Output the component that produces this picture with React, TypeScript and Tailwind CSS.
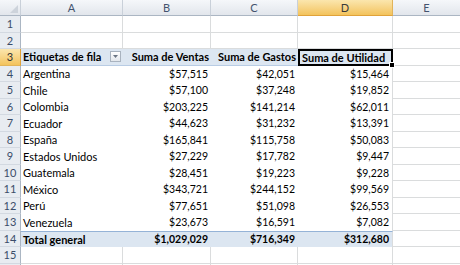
const data: [string, string, string, string][] = [
  ["Argentina", "$57,515", "$42,051", "$15,464"],
  ["Chile", "$57,100", "$37,248", "$19,852"],
  ["Colombia", "$203,225", "$141,214", "$62,011"],
  ["Ecuador", "$44,623", "$31,232", "$13,391"],
  ["España", "$165,841", "$115,758", "$50,083"],
  ["Estados Unidos", "$27,229", "$17,782", "$9,447"],
  ["Guatemala", "$28,451", "$19,223", "$9,228"],
  ["México", "$343,721", "$244,152", "$99,569"],
  ["Perú", "$77,651", "$51,098", "$26,553"],
  ["Venezuela", "$23,673", "$16,591", "$7,082"],
];

const grid = "grid grid-cols-[21px_102px_88px_87px_95px_1fr] h-[16.5px]";
const colHead =
  "flex items-center justify-center border-r border-b border-r-[#c9d0d9] border-b-[#abb6c3] bg-gradient-to-b from-[#f5f7fa] to-[#e2e6ec] text-[#43536e]";
const colHeadSel =
  "flex items-center justify-center border-r border-b border-r-[#e2b45a] border-b-[#e0a23a] bg-gradient-to-b from-[#fbe6ad] to-[#f3c35b] text-[#3a3a3a]";
const blank = "border-r border-b border-[#dadcdd]";
const num = "flex items-center justify-end pr-[3px] text-[10.5px]";

function RowNum({ n, active }: { n?: number; active?: boolean }) {
  return (
    <div
      className={
        active
          ? "flex items-center justify-center border-r border-b border-r-[#e0a23a] border-b-[#e2b45a] bg-gradient-to-b from-[#fbe6ad] to-[#f3c35b] text-[#333]"
          : "flex items-center justify-center border-r border-b border-r-[#abb6c3] border-b-[#d3d9e1] bg-[#e8ecf1] text-[#3a4c69]"
      }
    >
      {n}
    </div>
  );
}

function EmptyRow({ n }: { n?: number }) {
  return (
    <div className={grid}>
      <RowNum n={n} />
      <div className={blank} />
      <div className={blank} />
      <div className={blank} />
      <div className={blank} />
      <div className="border-b border-[#dadcdd]" />
    </div>
  );
}

export default function App() {
  return (
    <div className="w-[460px] h-[265px] overflow-hidden bg-white font-[Lato,sans-serif] text-[11px] leading-none text-black">
      {/* column letters */}
      <div className="grid grid-cols-[21px_102px_88px_87px_95px_1fr] h-[16px]">
        <div className="relative border-r border-b border-r-[#c9d0d9] border-b-[#abb6c3] bg-gradient-to-b from-[#f5f7fa] to-[#e2e6ec]">
          <svg className="absolute right-[2px] bottom-[2px]" width="8" height="8" viewBox="0 0 8 8">
            <polygon points="8,0 8,8 0,8" fill="#cdd3db" />
          </svg>
        </div>
        <div className={colHead}>A</div>
        <div className={colHead}>B</div>
        <div className={colHead}>C</div>
        <div className={colHeadSel}>D</div>
        <div className={colHead + " border-r-0"}>E</div>
      </div>

      <EmptyRow n={1} />
      <EmptyRow n={2} />

      {/* pivot header */}
      <div className={grid}>
        <RowNum n={3} active />
        <div className="flex items-center justify-between pl-[2px] pr-[2px] bg-[#dce6f1] border-b border-[#b8cce4] font-bold">
          <span>Etiquetas de fila</span>
          <span className="flex h-[11px] w-[11px] items-center justify-center border border-[#a9b3bf] bg-gradient-to-b from-white to-[#e3e7ec]">
            <svg width="5" height="3" viewBox="0 0 5 3">
              <polygon points="0,0 5,0 2.5,3" fill="#6b7584" />
            </svg>
          </span>
        </div>
        <div className="flex items-center justify-end pr-[2px] bg-[#dce6f1] border-b border-[#b8cce4] font-bold">
          Suma de Ventas
        </div>
        <div className="flex items-center justify-end pr-[2px] bg-[#dce6f1] border-b border-[#b8cce4] font-bold">
          Suma de Gastos
        </div>
        <div className="relative flex items-center justify-start pl-[2px] bg-[#dce6f1] border-2 border-black font-bold">
          Suma de Utilidad
          <span className="absolute -right-[4px] -bottom-[4px] h-[6px] w-[6px] bg-black border border-white" />
        </div>
        <div className="border-b border-[#dadcdd]" />
      </div>

      {data.map((r, i) => (
        <div key={r[0]} className={grid}>
          <RowNum n={i + 4} />
          <div className="flex items-center pl-[2px]">{r[0]}</div>
          <div className={num}>{r[1]}</div>
          <div className={num}>{r[2]}</div>
          <div className={num + " border-r border-[#dadcdd]"}>{r[3]}</div>
          <div className="border-b border-[#dadcdd]" />
        </div>
      ))}

      {/* total */}
      <div className={grid}>
        <RowNum n={14} />
        <div className="flex items-center pl-[2px] bg-[#dce6f1] border-t border-[#95b3d7] font-bold">Total general</div>
        <div className={num + " bg-[#dce6f1] border-t border-[#95b3d7] font-bold"}>$1,029,029</div>
        <div className={num + " bg-[#dce6f1] border-t border-[#95b3d7] font-bold"}>$716,349</div>
        <div className={num + " bg-[#dce6f1] border-t border-[#95b3d7] border-r border-r-[#dadcdd] font-bold"}>$312,680</div>
        <div className="border-b border-[#dadcdd]" />
      </div>

      <EmptyRow n={15} />
      <EmptyRow />
    </div>
  );
}
